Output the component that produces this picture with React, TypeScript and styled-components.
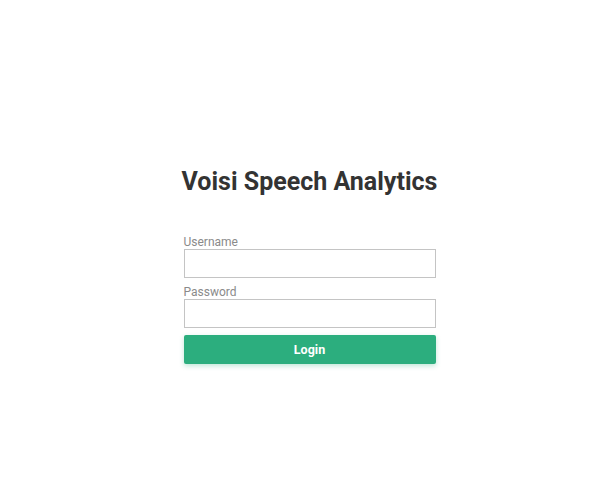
import React, { useState } from 'react';
import styled, { createGlobalStyle } from 'styled-components';

const GlobalStyle = createGlobalStyle`
  html, body {
    margin: 0;
    padding: 0;
    background: #ffffff;
    font-family: Roboto, "Liberation Sans", Arial, sans-serif;
  }
`;

const App: React.FC = () => {
  const [username, setUsername] = useState<string>('');
  const [password, setPassword] = useState<string>('');

  const onSubmit = (event: React.FormEvent) => {
    event.preventDefault();
  };

  return (
    <>
      <GlobalStyle />
      <Page>
        <Title>Voisi Speech Analytics</Title>
        <Form onSubmit={onSubmit}>
          <Field>
            <Label htmlFor="username">Username</Label>
            <Input
              id="username"
              type="text"
              value={username}
              onChange={(e) => setUsername(e.target.value)}
            />
          </Field>
          <Field>
            <Label htmlFor="password">Password</Label>
            <Input
              id="password"
              type="password"
              value={password}
              onChange={(e) => setPassword(e.target.value)}
            />
          </Field>
          <Button type="submit">Login</Button>
        </Form>
      </Page>
    </>
  );
};

export default App;

const Page = styled.div`
  display: flex;
  flex-direction: column;
  align-items: center;
  width: 100%;
  min-height: 496px;
  padding: 166px 0 0 6px;
  box-sizing: border-box;
`;

const Title = styled.h1`
  margin: 0 0 36px;
  font-size: 25px;
  font-weight: 700;
  line-height: 32px;
  color: #333333;
`;

const Form = styled.form`
  display: flex;
  flex-direction: column;
  width: 252px;
`;

const Field = styled.div`
  display: flex;
  flex-direction: column;
  margin-bottom: 6px;
`;

const Label = styled.label`
  font-size: 12px;
  line-height: 16px;
  height: 15px;
  color: #8a8a8a;
`;

const Input = styled.input`
  box-sizing: border-box;
  width: 100%;
  height: 29px;
  border: 1px solid #c4c4c4;
  border-radius: 0;
  padding: 0 6px;
  font-family: inherit;
  font-size: 13px;
  outline: none;
`;

const Button = styled.button`
  margin-top: 1px;
  height: 29px;
  border: none;
  border-radius: 2px;
  background-color: #2cae7e;
  color: #ffffff;
  font-family: inherit;
  font-size: 12.5px;
  font-weight: 700;
  cursor: pointer;
  box-shadow: 0 2px 5px rgba(44, 174, 126, 0.3);
`;
